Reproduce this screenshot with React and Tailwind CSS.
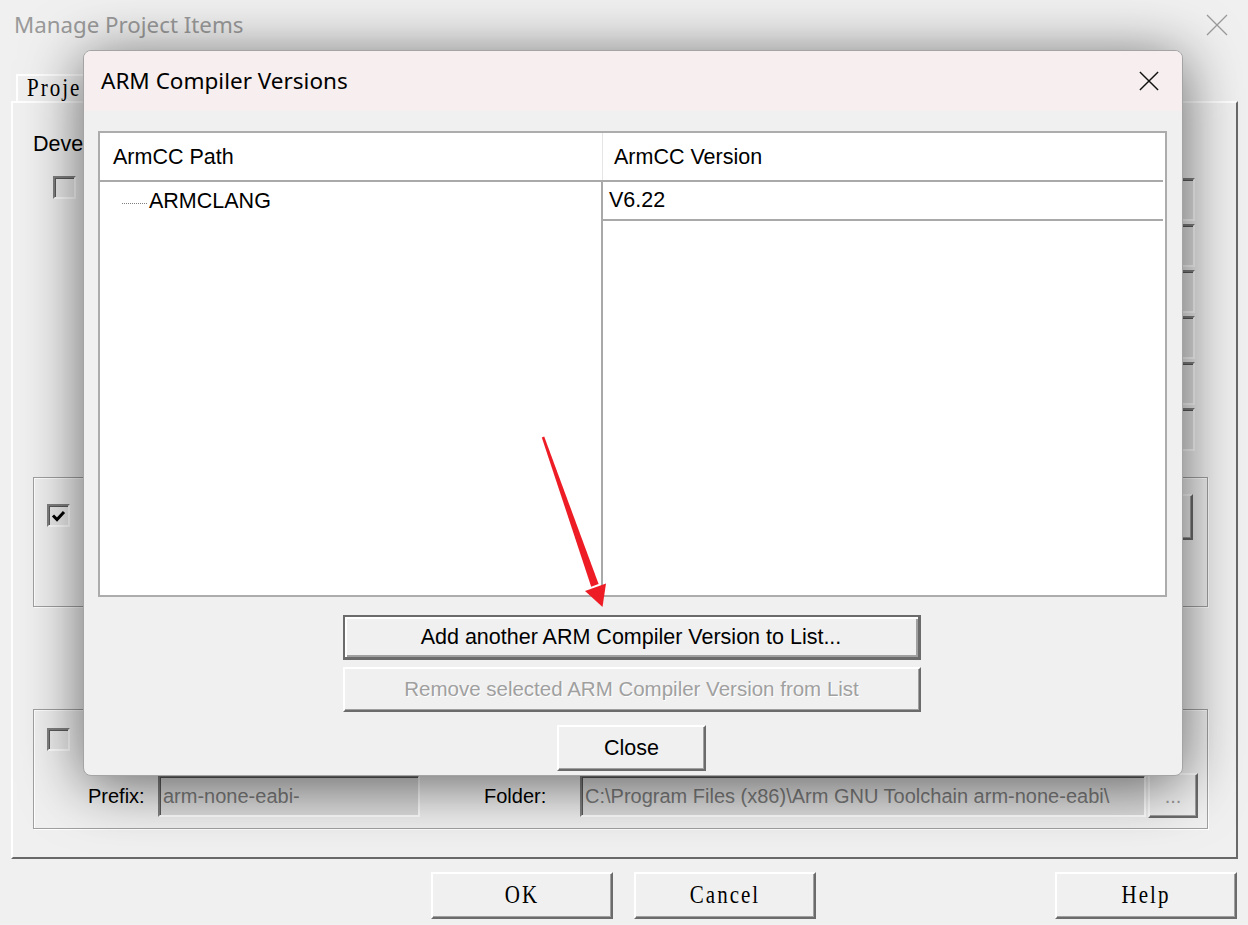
import React from 'react'

const raised =
  'border-2 border-t-white border-l-white border-r-[#6b6b6b] border-b-[#6b6b6b] shadow-[inset_-1px_-1px_0_#a0a0a0] bg-[#f0f0f0]'
const sunken =
  'border-2 border-t-[#808080] border-l-[#808080] border-r-white border-b-white shadow-[inset_1px_1px_0_#5a5a5a]'
const etched = 'border border-[#a0a0a0] shadow-[1px_1px_0_#fff,inset_1px_1px_0_#fff]'

function Check({ checked, className = '' }) {
  return (
    <div className={`w-[23px] h-[23px] flex items-center justify-center bg-[#ececec] ${sunken} ${className}`}>
      {checked && (
        <svg width="15" height="12" viewBox="0 0 15 12">
          <path d="M2 5.5 L6 9.5 L13 2" fill="none" stroke="#000" strokeWidth="3" />
        </svg>
      )}
    </div>
  )
}

function MonoBtn({ children, className = '' }) {
  return (
    <div className={`w-[182px] h-[47px] flex items-center justify-center ${raised} ${className}`}>
      <span className="inline-block scale-y-[1.2] font-['Liberation_Serif',serif] text-[21px] tracking-[2px] text-black">
        {children}
      </span>
    </div>
  )
}

function Cross({ color, size = 22, width = 1.5 }) {
  return (
    <svg width={size} height={size} viewBox="0 0 22 22">
      <path d="M1 1 L21 21 M21 1 L1 21" stroke={color} strokeWidth={width} fill="none" />
    </svg>
  )
}

export default function App() {
  return (
    <div className="relative w-[1248px] h-[925px] overflow-hidden bg-[#f0f0f0] font-['Liberation_Sans',Tahoma,sans-serif] text-[21.5px] text-black">
      {/* Manage Project Items (back window) */}
      <div className="h-[50px] flex items-center justify-between pl-[14px] pr-[20px]">
        <span className="font-['Noto_Sans',sans-serif] text-[22.3px] text-[#9a9a9a]">Manage Project Items</span>
        <Cross color="#9a9a9a" size={22} width={1.3} />
      </div>

      <div className="pl-[11px] pr-[10px] pt-[24px]">
        <div className="ml-[5px] w-[210px] h-[27px] flex items-center pl-[9px] border-t-2 border-l-2 border-r-2 border-t-white border-l-white border-r-[#a0a0a0] bg-[#f0f0f0]">
          <span className="inline-block scale-y-[1.2] font-['Liberation_Serif',serif] text-[21px] tracking-[2px]">Proje</span>
        </div>

        <div className="h-[758px] border-2 border-t-white border-l-white border-r-[#696969] border-b-[#696969] pl-[20px] pr-[28px] pt-[30px] flex flex-col">
          <div className="flex items-start justify-between h-[318px]">
            <div className="flex flex-col">
              <span className="h-[22px] leading-[22px]">Deve</span>
              <Check className="ml-[20px] mt-[21px]" />
            </div>
            <div className="mr-[13px] mt-[45px] flex flex-col gap-[3px]">
              {[0, 1, 2, 3, 4, 5].map((i) => (
                <div key={i} className={`w-[220px] h-[43px] bg-[#e6e6e6] ${sunken}`} />
              ))}
            </div>
          </div>

          <div className={`mt-[26px] h-[130px] flex items-start justify-between pl-[13px] pr-[14px] pt-[26px] ${etched}`}>
            <Check checked />
            <div className={`-mt-[10px] w-[160px] h-[46px] ${raised}`} />
          </div>

          <div className={`mt-[102px] h-[120px] flex flex-col pl-[13px] pr-[7px] pt-[18px] ${etched}`}>
            <Check />
            <div className="flex items-center mt-[22px]">
              <span className="ml-[41px] w-[70px] text-[20px]">Prefix:</span>
              <div className={`w-[262px] h-[42px] flex items-center pl-[3px] bg-[#dedede] text-[20px] text-[#7a7a7a] ${sunken}`}>
                arm-none-eabi-
              </div>
              <span className="ml-[64px] w-[96px] text-[20px]">Folder:</span>
              <div className={`w-[566px] h-[42px] flex items-center pl-[3px] bg-[#dedede] text-[20px] text-[#7a7a7a] whitespace-nowrap overflow-hidden ${sunken}`}>
                C:\Program Files (x86)\Arm GNU Toolchain arm-none-eabi\
              </div>
              <div className={`ml-[2px] w-[50px] h-[45px] flex items-center justify-center text-[20px] text-[#9a9a9a] ${raised}`}>
                ...
              </div>
            </div>
          </div>
        </div>
      </div>

      <div className="flex mt-[13px] pr-[11px]">
        <MonoBtn className="ml-[431px]">OK</MonoBtn>
        <MonoBtn className="ml-[21px]">Cancel</MonoBtn>
        <MonoBtn className="ml-auto">Help</MonoBtn>
      </div>

      {/* ARM Compiler Versions dialog, floating over the back window */}
      <div className="absolute left-[83px] top-[50px] w-[1100px] h-[726px] rounded-[8px] border border-[#a4a4a4] overflow-hidden bg-[#f0f0f0] shadow-[0_8px_60px_rgba(0,0,0,0.6)] flex flex-col">
        <div className="h-[60px] shrink-0 bg-[#f7efef] flex items-center justify-between pl-[17px] pr-[23px]">
          <span className="font-['Noto_Sans',sans-serif] text-[22.5px]">ARM Compiler Versions</span>
          <Cross color="#111" size={20} width={1.6} />
        </div>

        <div className="flex flex-col px-[14px] pt-[20px]">
          <div className="w-[1069px] h-[466px] border-2 border-[#acacac] bg-white">
            <div className="w-[1063px] h-[49px] flex border-b-2 border-[#a9a9a9]">
              <div className="w-[503px] flex items-center pl-[13px] pt-[2px] border-r border-[#e5e5e5]">ArmCC Path</div>
              <div className="flex-1 flex items-center pl-[11px] pt-[2px]">ArmCC Version</div>
            </div>
            <div className="w-[1063px] h-[411px] flex">
              <div className="w-[501px]">
                <div className="h-[38px] flex items-center pl-[22px]">
                  <div className="w-[25px] mt-[4px] border-t border-dotted border-[#808080]" />
                  <span className="ml-[2px]">ARMCLANG</span>
                </div>
              </div>
              <div className="flex-1 border-l-2 border-[#a9a9a9]">
                <div className="h-[39px] flex items-center pl-[6px] border-b-2 border-[#a9a9a9]">V6.22</div>
              </div>
            </div>
          </div>

          <div className="flex flex-col items-center pr-[3px]">
            <div className="mt-[18px] w-[578px] h-[45px] border-2 border-[#6b6b6b] border-b-[3px] border-r-[3px] shadow-[inset_2px_2px_0_#fff,inset_-2px_-2px_0_#a0a0a0] flex items-center justify-center">
              Add another ARM Compiler Version to List...
            </div>
            <div className={`mt-[7px] w-[578px] h-[45px] flex items-center justify-center text-[20.5px] text-[#a0a0a0] [text-shadow:1px_1px_0_#fff] ${raised}`}>
              Remove selected ARM Compiler Version from List
            </div>
            <div className={`mt-[13px] w-[149px] h-[46px] flex items-center justify-center ${raised}`}>Close</div>
          </div>
        </div>
      </div>

      {/* red annotation arrow */}
      <svg className="absolute inset-0 pointer-events-none" width="1248" height="925">
        <polygon points="544.2,436.6 541.8,437.4 591.2,586.7 598.6,584" fill="#ee1c25" />
        <polygon points="585,591 606,583.5 602.5,607" fill="#ee1c25" />
      </svg>
    </div>
  )
}
